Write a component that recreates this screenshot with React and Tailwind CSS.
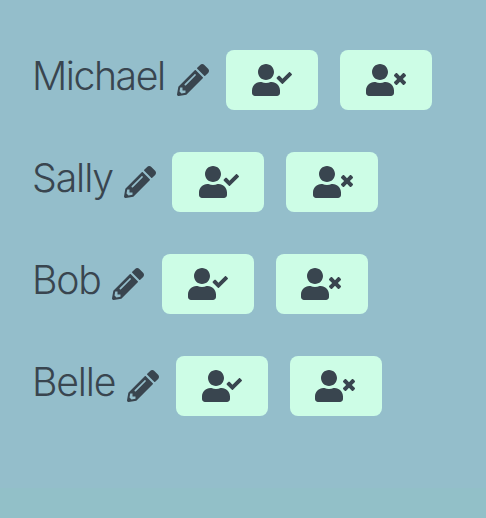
import { FaPencilAlt, FaUserCheck, FaUserTimes } from "react-icons/fa";

const people = [
  { name: "Michael", box: "w-[145px]", text: "tracking-[-1.45px]", gap: "ml-[17px]", check: "", cross: "" },
  { name: "Sally", box: "w-[92px]", text: "tracking-[-1.1px]", gap: "ml-4", check: "pl-0.5", cross: "pl-0.5" },
  { name: "Bob", box: "w-20", text: "tracking-[-1.2px]", gap: "ml-[18px]", check: "", cross: "pr-0.5" },
  { name: "Belle", box: "w-[95px]", text: "tracking-[-1.2px]", gap: "ml-[17px]", check: "", cross: "pr-0.5" },
];

function IconButton({ label, inset, children }) {
  return (
    <button
      aria-label={label}
      className={`flex h-[60px] w-[92px] shrink-0 items-center justify-center rounded-lg bg-[#cdfde6] ${inset}`}
    >
      {children}
    </button>
  );
}

function PersonRow({ name, box, text, gap, check, cross }) {
  return (
    <li className="flex h-[60px] items-center">
      <span className={`${box} shrink-0 whitespace-nowrap`}>
        <span className={`relative -top-1 text-[39.2px] leading-[48px] font-[350] ${text}`}>{name}</span>
      </span>
      <FaPencilAlt className="size-8 shrink-0" />
      <div className={`flex gap-[22px] ${gap}`}>
        <IconButton label="Accept" inset={check}>
          <FaUserCheck className="h-8 w-10" />
        </IconButton>
        <IconButton label="Decline" inset={cross}>
          <FaUserTimes className="h-8 w-10" />
        </IconButton>
      </div>
    </li>
  );
}

export default function App() {
  return (
    <main className="h-[518px] w-[486px] overflow-hidden bg-[#92c0c8] font-[Inter,'Liberation_Sans',sans-serif] text-[#39454f]">
      <ul className="flex h-[488px] flex-col gap-[42px] bg-[#94becb] pt-[50px] pl-8">
        {people.map((person) => (
          <PersonRow key={person.name} {...person} />
        ))}
      </ul>
    </main>
  );
}
